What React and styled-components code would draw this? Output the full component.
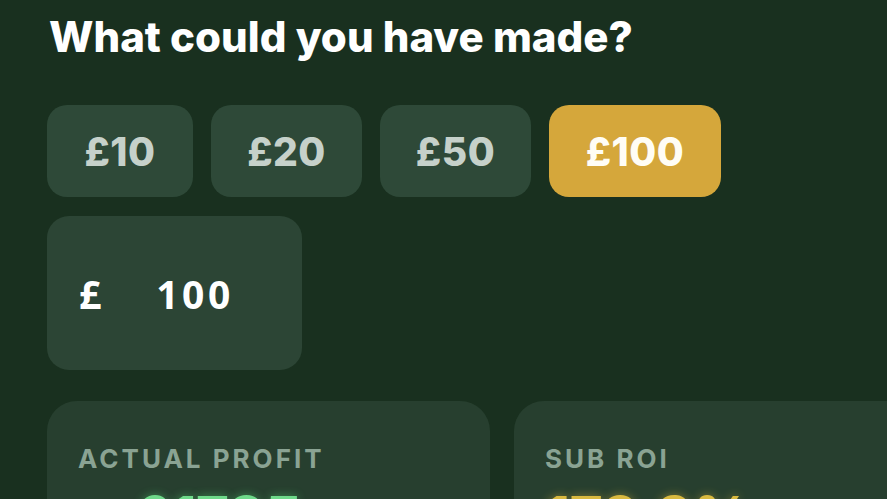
import React, { useState } from "react";
import styled, { createGlobalStyle } from "styled-components";

const Global = createGlobalStyle`
  html, body { margin: 0; padding: 0; background: #19301f; }
  body { overflow: hidden; font-family: Inter, "Noto Sans", sans-serif; }
`;

const Page = styled.div`
  width: 887px;
  height: 499px;
  overflow: hidden;
  background: #19301f;
  padding: 12px 0 0 47px;
  box-sizing: border-box;
`;

const Title = styled.h1`
  margin: 0 0 0 2px;
  font-family: Inter, sans-serif;
  font-weight: 800;
  font-size: 42px;
  line-height: 50px;
  color: #ffffff;
  letter-spacing: 0;
`;

const Presets = styled.div`
  display: flex;
  gap: 18px;
  margin-top: 43px;
`;

const Preset = styled.button`
  height: 92px;
  min-width: ${(p) => p.$w}px;
  border: none;
  border-radius: 20px;
  background: ${(p) => (p.$active ? "#d5a73b" : "#2e4938")};
  color: ${(p) => (p.$active ? "#fffdf5" : "#c6d1ca")};
  font-family: Inter, sans-serif;
  font-weight: 800;
  font-size: 39px;
  letter-spacing: 0.5px;
  padding: 0;
  cursor: pointer;
`;

const InputBox = styled.div`
  margin-top: 19px;
  width: 255px;
  height: 154px;
  border-radius: 22px;
  background: #2c4535;
  display: flex;
  align-items: center;
  padding: 0 0 0 32px;
  box-sizing: border-box;
  gap: 55px;
  font-family: "Open Sans", sans-serif;
  font-weight: 700;
  font-size: 39px;
  color: #ffffff;
`;

const Currency = styled.span`
  line-height: 1;
`;

const Amount = styled.span`
  line-height: 1;
  letter-spacing: 3.5px;
`;

const Cards = styled.div`
  display: grid;
  grid-template-columns: 443px 443px;
  gap: 24px;
  margin-top: 31px;
`;

const Card = styled.div`
  height: 160px;
  border-radius: 30px;
  background: #273f2f;
  padding: 42px 0 0 31px;
  box-sizing: border-box;
`;

const Label = styled.div`
  font-family: Inter, sans-serif;
  font-weight: 700;
  font-size: 26px;
  letter-spacing: 3px;
  color: #8aa393;
  line-height: 32px;
`;

const Value = styled.div`
  margin-top: 10px;
  margin-left: ${(p) => p.$indent}px;
  font-family: Inter, sans-serif;
  font-weight: 800;
  font-size: 56px;
  line-height: 64px;
  color: ${(p) => p.$color};
  text-shadow: 0 0 10px ${(p) => p.$glow};
`;

const presets = [
  { v: 10, w: 146 },
  { v: 20, w: 151 },
  { v: 50, w: 151 },
  { v: 100, w: 172 },
];

export default function App() {
  const [amount, setAmount] = useState(100);
  return (
    <Page>
      <Global />
      <Title>What could you have made?</Title>
      <Presets>
        {presets.map((p) => (
          <Preset
            key={p.v}
            $w={p.w}
            $active={amount === p.v}
            onClick={() => setAmount(p.v)}
          >
            £{p.v}
          </Preset>
        ))}
      </Presets>
      <InputBox>
        <Currency>£</Currency>
        <Amount>{amount}</Amount>
      </InputBox>
      <Cards>
        <Card>
          <Label>ACTUAL PROFIT</Label>
          <Value $indent={57} $color="#6fd98a" $glow="rgba(90,220,120,0.45)">
            £1735
          </Value>
        </Card>
        <Card>
          <Label>SUB ROI</Label>
          <Value $indent={0} $color="#d9b940" $glow="rgba(230,190,60,0.45)">
            173.9%
          </Value>
        </Card>
      </Cards>
    </Page>
  );
}
